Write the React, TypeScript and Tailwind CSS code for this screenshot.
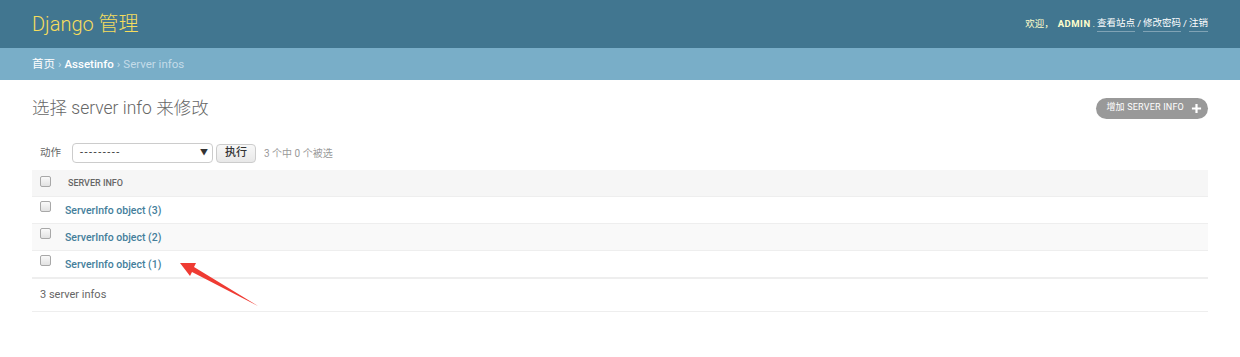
import React from "react";

const rows = ["ServerInfo object (3)", "ServerInfo object (2)", "ServerInfo object (1)"];

function Box() {
  return <span className="inline-block w-[11px] h-[11px] rounded-[2px] border border-[#a8a8a8] bg-gradient-to-b from-[#fafafa] to-[#e2e2e2]" />;
}

export default function App() {
  return (
    <div className="relative w-[1240px] h-[357px] bg-white text-[13px] text-[#333] overflow-hidden" style={{ fontFamily: 'Roboto, "Noto Sans CJK SC", sans-serif' }}>
      <div className="h-[48px] bg-[#417690] flex items-center justify-between px-[32px]">
        <div className="text-[20px] font-light text-[#f5dd5d] leading-none">Django 管理</div>
        <div className="text-[9.5px] text-[#ffc] flex items-center gap-[2px]">
          <span>欢迎，</span>
          <span className="font-bold tracking-[0.5px] ml-[2px]">ADMIN</span>
          <span>.</span>
          <span className="text-white border-b border-[#ffffff55]">查看站点</span>
          <span className="text-white">/</span>
          <span className="text-white border-b border-[#ffffff55]">修改密码</span>
          <span className="text-white">/</span>
          <span className="text-white border-b border-[#ffffff55]">注销</span>
        </div>
      </div>
      <div className="h-[32px] bg-[#79aec8] flex items-center px-[32px] text-[11.5px] text-[#c4dce8] pt-[1px]">
        <span className="text-white">首页</span>
        <span className="mx-[3px]">›</span>
        <span className="text-white font-medium">Assetinfo</span>
        <span className="mx-[3px]">›</span>
        <span>Server infos</span>
      </div>
      <div className="px-[32px]">
        <div className="flex items-center justify-between mt-[16px] h-[22px] pt-[2px]">
          <div className="text-[17.5px] font-light text-[#666]">选择 server info 来修改</div>
          <div className="h-[21px] rounded-full bg-[#999] text-white text-[9px] flex items-center pl-[10px] pr-[6px] tracking-[0.2px]">
            增加 SERVER INFO
            <svg width="11" height="11" viewBox="0 0 12 12" className="ml-[7px]">
              <path d="M4.8 1h2.4v3.8H11v2.4H7.2V11H4.8V7.2H1V4.8h3.8z" fill="#fff" />
            </svg>
          </div>
        </div>
        <div className="flex items-center h-[20px] mt-[25px] text-[10.5px] text-[#666]">
          <span className="ml-[8px] mr-[11px]">动作</span>
          <div className="w-[141px] h-[20px] border border-[#ccc] rounded-[4px] flex items-center justify-between pl-[7px] pr-[4px] text-[#333]">
            <span className="text-[11px] tracking-[1.5px]">---------</span>
            <span className="text-[8px]">▼</span>
          </div>
          <div className="ml-[3px] h-[19px] px-[8px] border border-[#ccc] rounded-[4px] bg-gradient-to-b from-[#f8f8f8] to-[#e8e8e8] flex items-center text-[11px] text-[#333] font-medium">执行</div>
          <span className="ml-[8px] text-[#999] text-[10px]">3 个中 0 个被选</span>
        </div>
        <div className="mt-[7px] h-[27px] bg-[#f6f6f6] flex items-center border-b border-[#eee] pt-[2px]">
          <span className="ml-[8px] -mt-[3px]"><Box /></span>
          <span className="ml-[17px] text-[9px] font-medium text-[#666]">SERVER INFO</span>
        </div>
        {rows.map((r, i) => (
          <div key={r} className={"h-[27px] flex items-center border-b border-[#eee] pt-[1px] " + (i === 1 ? "bg-[#f9f9f9]" : "bg-white")}>
            <span className="ml-[8px] -mt-[5px]"><Box /></span>
            <span className="ml-[14px] text-[10.5px] font-medium text-[#447e9b]">{r}</span>
          </div>
        ))}
        <div className="h-[34px] border-t border-[#eee] border-b flex items-center pl-[8px] text-[11px] text-[#666] pt-[1px]">3 server infos</div>
      </div>
      <svg className="absolute left-0 top-0" width="1240" height="357">
        <polygon points="258,306 192,272 190,276 180,263 196,263 194,267" fill="#ef3b33" />
      </svg>
    </div>
  );
}
